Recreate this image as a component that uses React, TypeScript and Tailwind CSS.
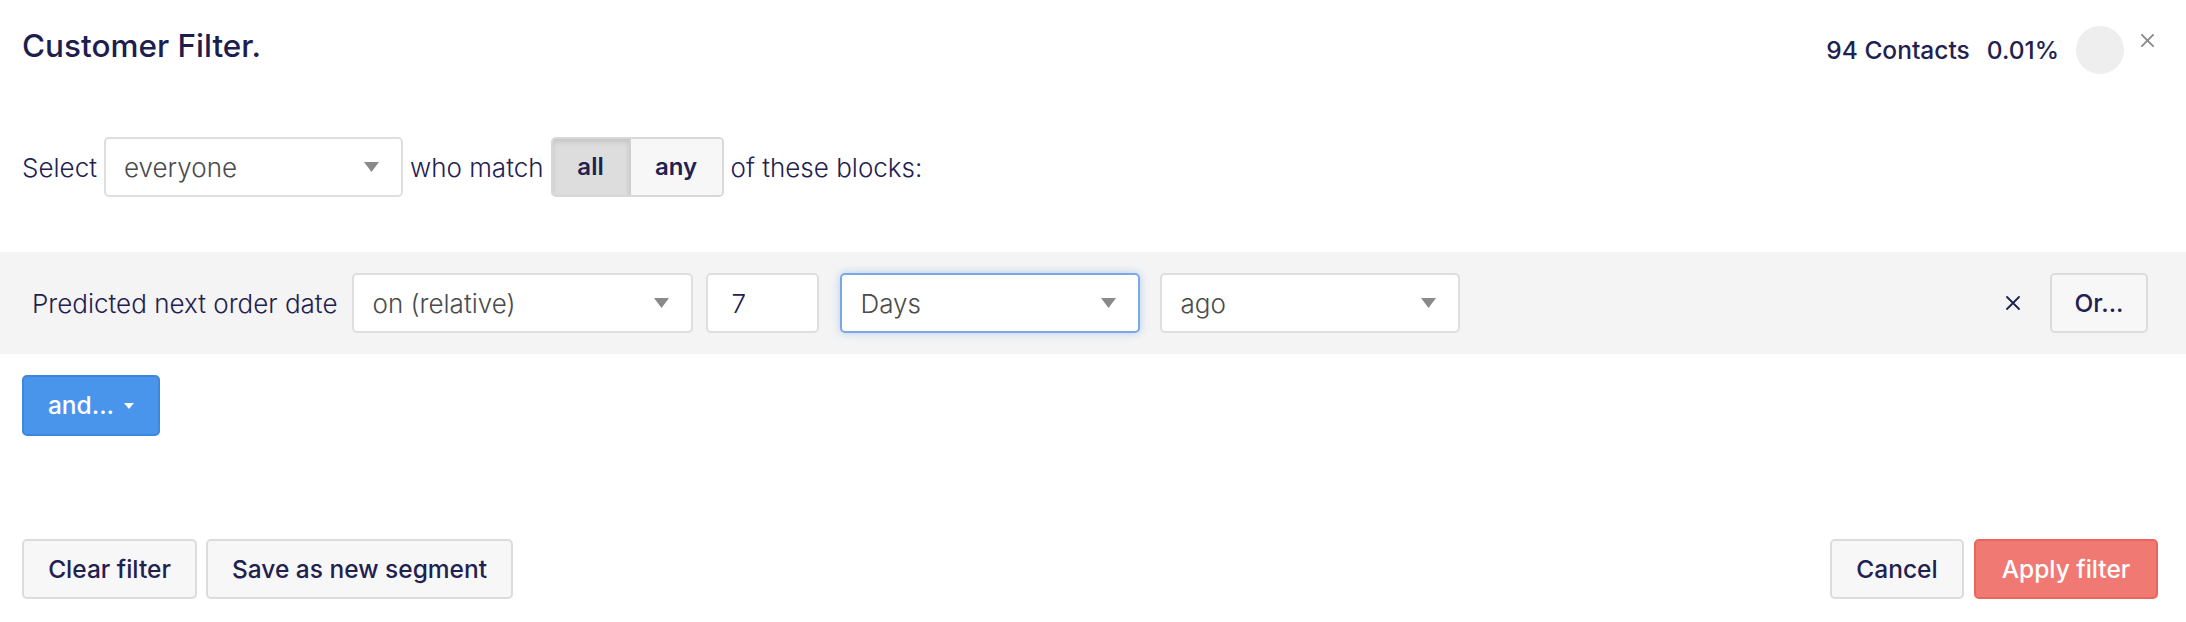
import React from 'react';

const FONT = { fontFamily: 'Inter, "Open Sans", "Noto Sans", sans-serif' };

const Caret = ({ className = '' }: { className?: string }) => (
  <svg width="15" height="10" viewBox="0 0 15 10" className={className}>
    <polygon points="0,0 15,0 7.5,10" fill="#8a8a8a" />
  </svg>
);

const Cross = ({ size = 14, color = '#222', stroke = 1.8 }: { size?: number; color?: string; stroke?: number }) => (
  <svg width={size} height={size} viewBox="0 0 14 14">
    <path d="M1 1L13 13M13 1L1 13" stroke={color} strokeWidth={stroke} strokeLinecap="round" />
  </svg>
);

interface SelectBoxProps {
  value: string;
  width: string;
  focused?: boolean;
}

const SelectBox: React.FC<SelectBoxProps> = ({ value, width, focused }) => (
  <div
    className={`${width} h-[60px] flex items-center justify-between pl-[18px] pr-[22px] bg-white rounded-[5px] border-2 ${
      focused ? 'border-[#7aa8e6] shadow-[0_0_9px_rgba(102,160,233,0.45)]' : 'border-[#dedede]'
    }`}
  >
    <span className="text-[26px] font-light text-[#4a4a4a]">{value}</span>
    <Caret />
  </div>
);

const btn = 'h-[60px] flex items-center justify-center rounded-[5px] border-2 text-[24.5px] font-medium';
const greyBtn = `${btn} bg-[#f7f7f7] border-[#dcdcdc] text-[#1f2150]`;

export default function App() {
  return (
    <div className="w-full h-[622px] bg-white flex flex-col text-[#1f2150]" style={FONT}>
      {/* header */}
      <div className="flex justify-between items-start pt-[26px] pl-[22px] pr-[32px]">
        <h1 className="text-[31.5px] leading-[40px] font-medium text-[#1d1e4e]">Customer Filter.</h1>
        <div className="flex items-start">
          <div className="flex items-center h-[48px] gap-[17px] text-[24.5px] font-medium">
            <span>94 Contacts</span>
            <span>0.01%</span>
          </div>
          <div className="w-[48px] h-[48px] rounded-full bg-[#eeeeee] ml-[17px]" />
          <div className="ml-[17px] mt-[8px]">
            <Cross size={13} color="#8a8a8a" stroke={2} />
          </div>
        </div>
      </div>

      {/* select row */}
      <div className="flex items-center gap-[7px] px-[22px] mt-[63px] h-[60px] text-[26px] font-light">
        <span>Select</span>
        <SelectBox value="everyone" width="w-[299px]" />
        <span>who match</span>
        <div className="flex h-[60px] rounded-[5px] border-2 border-[#d8d8d8] overflow-hidden font-semibold text-[24px]">
          <div className="w-[78px] flex items-center justify-center bg-[#dddddd] shadow-[inset_0_3px_5px_rgba(0,0,0,0.12)] border-r-2 border-[#cfcfcf]">
            all
          </div>
          <div className="w-[91px] flex items-center justify-center bg-[#f7f7f7]">any</div>
        </div>
        <span>of these blocks:</span>
      </div>

      {/* block */}
      <div className="mt-[55px] h-[102px] bg-[#f4f4f4] flex items-center pl-[32px] pr-[38px]">
        <span className="text-[26px] font-light mr-[15px]">Predicted next order date</span>
        <SelectBox value="on (relative)" width="w-[341px]" />
        <div className="ml-[13px] w-[113px] h-[60px] bg-white rounded-[5px] border-2 border-[#dedede] flex items-center pl-[23px] text-[26px] font-light">
          7
        </div>
        <div className="ml-[21px]">
          <SelectBox value="Days" width="w-[300px]" focused />
        </div>
        <div className="ml-[20px]">
          <SelectBox value="ago" width="w-[300px]" />
        </div>
        <div className="flex-1" />
        <div className="mr-[30px]">
          <Cross size={14} color="#1f2150" stroke={1.8} />
        </div>
        <button className={`${greyBtn} w-[98px]`}>Or...</button>
      </div>

      {/* and */}
      <div className="px-[22px] mt-[21px]">
        <button className="h-[61px] w-[138px] flex items-center justify-center gap-[10px] rounded-[5px] border-2 border-[#3d87dd] bg-[#4a95ec] text-white text-[24.5px] font-medium">
          <span>and...</span>
          <svg width="10" height="6" viewBox="0 0 10 6">
            <polygon points="0,0 10,0 5,6" fill="#ffffff" />
          </svg>
        </button>
      </div>

      {/* footer */}
      <div className="flex justify-between pl-[22px] pr-[28px] mt-[103px]">
        <div className="flex gap-[9px]">
          <button className={`${greyBtn} w-[175px]`}>Clear filter</button>
          <button className={`${greyBtn} w-[307px]`}>Save as new segment</button>
        </div>
        <div className="flex gap-[10px]">
          <button className={`${greyBtn} w-[134px]`}>Cancel</button>
          <button className={`${btn} w-[184px] bg-[#f07a73] border-[#e9655e] text-white`}>Apply filter</button>
        </div>
      </div>
    </div>
  );
}
